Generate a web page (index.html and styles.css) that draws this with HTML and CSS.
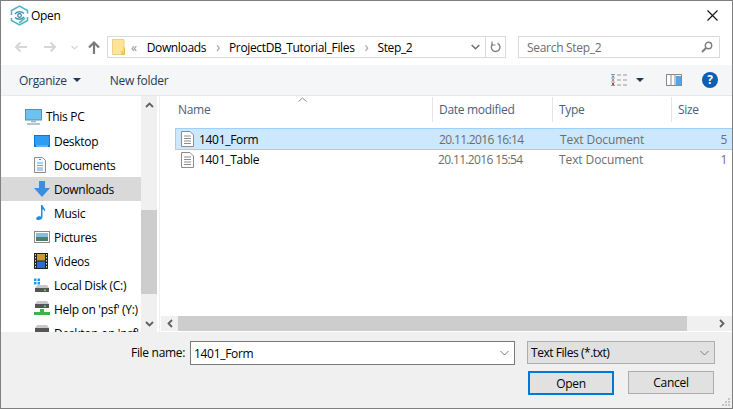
FILE: index.html
```html
<!DOCTYPE html>
<html lang="en">
<head>
<meta charset="utf-8">
<title>Open</title>
<link rel="stylesheet" href="styles.css">
</head>
<body>
<div class="window">
  <header class="titlebar">
    <svg class="app-icon" width="19" height="21" viewBox="0 0 19 21" fill="none">
      <path d="M1.500 10V5.500L9.500 1l8 4.500v3M17.500 12v3.500l-8 4.500-8-4.500V13" stroke="#52b0c4" stroke-width="1.500"/>
      <path d="M5 9c2-2.800 6.500-2.800 9-.5M14 12c-2 2.800-6.500 2.800-9 .5" stroke="#3f93b8" stroke-width="1.500"/>
      <circle cx="9.500" cy="10.500" r="1.800" stroke="#2b7fa8" stroke-width="1.200"/>
      <path d="M9 18l6-5" stroke="#58c4aa" stroke-width="1.800"/>
    </svg>
    <span class="title">Open</span>
    <svg class="close" width="11" height="11" viewBox="0 0 11 11"><path d="M.5.500l10 10M10.500.500l-10 10" stroke="#111" stroke-width="1.100"/></svg>
  </header>

  <nav class="navbar">
    <svg class="nav-arrow" width="13" height="12" viewBox="0 0 13 12"><path d="M13 6H2M6.500 1.500L2 6l4.500 4.500" fill="none" stroke="#d6d6d6" stroke-width="2"/></svg>
    <svg class="nav-arrow fwd" width="13" height="12" viewBox="0 0 13 12"><path d="M0 6h11M6.500 1.500L11 6l-4.500 4.500" fill="none" stroke="#d6d6d6" stroke-width="2"/></svg>
    <svg class="nav-drop" width="7" height="5" viewBox="0 0 7 5"><path d="M.5 1l3 3 3-3" fill="none" stroke="#d6d6d6" stroke-width="1.200"/></svg>
    <svg class="nav-up" width="12" height="13" viewBox="0 0 12 13"><path d="M6 13V2M1 6.500L6 1.500l5 5" fill="none" stroke="#7a7a7a" stroke-width="2.200"/></svg>
    <div class="address">
      <svg class="folder" width="13" height="16" viewBox="0 0 13 16"><path d="M.5.500h11.500v15H.5z" fill="#ffe396" stroke="#ead08a"/><path d="M12.500 8.500v7H10V12" fill="#f6d672" stroke="#e2bb55"/></svg>
      <span class="chev-double">«</span>
      <span class="crumb">Downloads</span>
      <span class="sep">›</span>
      <span class="crumb">ProjectDB_Tutorial_Files</span>
      <span class="sep">›</span>
      <span class="crumb">Step_2</span>
      <div class="address-end">
        <span class="addr-btn">
          <svg width="9" height="6" viewBox="0 0 9 6"><path d="M.7 1l3.800 3.800L8.300 1" fill="none" stroke="#6f6f6f" stroke-width="1.500"/></svg>
        </span>
        <span class="addr-btn refresh">
          <svg width="11" height="12" viewBox="0 0 11 12"><path d="M7.500 2.300A4.300 4.300 0 1 1 2.700 3" fill="none" stroke="#808080" stroke-width="1.400"/><path d="M2 .5v3.500h3.500" fill="none" stroke="#808080" stroke-width="1.200"/></svg>
        </span>
      </div>
    </div>
    <div class="search">
      <span>Search Step_2</span>
      <svg width="12" height="12" viewBox="0 0 12 12"><circle cx="7.500" cy="4.500" r="3.200" fill="none" stroke="#7d7d7d" stroke-width="1.400"/><path d="M5 7L1 11" stroke="#7d7d7d" stroke-width="2"/></svg>
    </div>
  </nav>

  <div class="toolbar">
    <span class="tool">Organize</span>
    <span class="caret"></span>
    <span class="tool newfolder">New folder</span>
    <div class="tool-right">
      <svg class="views" width="16" height="12" viewBox="0 0 16 12">
        <path d="M0 .500h4M0 4h4M0 8h4M0 11.500h4M6 1h4M6 6h4M6 11h4M12 1h4M12 6h4M12 11h4" stroke="#9a9a9a"/>
        <rect x="1" y="1.500" width="2" height="2" fill="#5aa0d8"/><rect x="1" y="5" width="2" height="2" fill="#9a9a9a"/><rect x="1" y="9" width="2" height="2" fill="#d04040"/>
      </svg>
      <span class="caret views-caret"></span>
      <svg class="pane" width="16" height="12" viewBox="0 0 16 12"><rect x=".5" y=".5" width="15" height="11" fill="#fff" stroke="#8a8a8a"/><rect x="10" y="2" width="5" height="9" fill="#4ea5e8"/><path d="M5 1v10M9 1v10" stroke="#8a8a8a"/></svg>
      <span class="help">?</span>
    </div>
  </div>

  <main class="content">
    <aside class="tree">
      <ul class="tree-list">
        <li class="tree-item root">
          <svg width="17" height="16" viewBox="0 0 17 16"><rect x=".5" y=".5" width="16" height="10.500" fill="#6ec2f0" stroke="#5a8fb0"/><path d="M6 12.500h5M2 15h13" stroke="#9cb2c2" stroke-width="1.600"/></svg>
          <span>This PC</span>
        </li>
        <li class="tree-item">
          <svg width="16" height="12" viewBox="0 0 16 12"><rect width="16" height="12" fill="#0d76d8"/><rect x="1" y="1" width="14" height="9" fill="#2e9cf2"/><path d="M2 11h12" stroke="#bfe0f8"/></svg>
          <span>Desktop</span>
        </li>
        <li class="tree-item">
          <svg width="12" height="16" viewBox="0 0 12 16"><path d="M.5.500h8l3 3v12H.5z" fill="#f8f8f8" stroke="#8c8c8c"/><path d="M3 6h6M3 8.500h6M3 11h6M3 13h6" stroke="#6aa6d6"/><path d="M5 2.500h2" stroke="#3c8ccc"/></svg>
          <span>Documents</span>
        </li>
        <li class="tree-item active">
          <svg width="16" height="16" viewBox="0 0 16 16"><path d="M5 0h6v7h5l-8 9-8-9h5z" fill="#3c8ee0"/></svg>
          <span>Downloads</span>
        </li>
        <li class="tree-item">
          <svg width="16" height="16" viewBox="0 0 16 16"><path d="M7 0h1.500c.5 3 3.500 3.500 2.500 7-.5-2-2-2.500-2.500-2.500V12c0 2-2.500 3.500-5 3-2-.5-1.500-3 .5-3.500 1-.3 2-.2 3 .2z" fill="#1c8cec"/></svg>
          <span>Music</span>
        </li>
        <li class="tree-item">
          <svg width="16" height="12" viewBox="0 0 16 12"><rect x=".5" y=".5" width="15" height="11" fill="#fff" stroke="#8a8a8a"/><rect x="2" y="2" width="12" height="4" fill="#86bfe0"/><rect x="2" y="6" width="12" height="4" fill="#4f7f68"/></svg>
          <span>Pictures</span>
        </li>
        <li class="tree-item">
          <svg width="14" height="16" viewBox="0 0 14 16"><rect width="14" height="16" fill="#222"/><rect x="3" y="1" width="8" height="6.500" fill="#c89a30"/><rect x="3" y="8.500" width="8" height="6.500" fill="#2c6cd0"/><path d="M1.500 1v14M12.500 1v14" stroke="#ddd" stroke-dasharray="1.500 1.500"/></svg>
          <span>Videos</span>
        </li>
        <li class="tree-item">
          <svg width="16" height="15" viewBox="0 0 16 15"><path d="M0 1h2.500v2.500H0zM3.500 1H6v2.500H3.500zM0 4.500h2.500V7H0zM3.500 4.500H6V7H3.500z" fill="#18a0e8"/><path d="M3 7.500h10l2 3H1z" fill="#c8c8c8"/><rect x="1" y="10.500" width="14" height="4" fill="#555"/><rect x="10" y="12" width="2" height="1.500" fill="#5fe060"/></svg>
          <span>Local Disk (C:)</span>
        </li>
        <li class="tree-item">
          <svg width="16" height="16" viewBox="0 0 16 16"><path d="M3 0h10l2 3H1z" fill="#c8c8c8"/><rect x="1" y="3" width="14" height="4" fill="#555"/><rect x="10" y="4.500" width="2" height="1.500" fill="#5fe060"/><path d="M6 8h4v3h6v3H0v-3h6z" fill="#3fb34a"/></svg>
          <span>Help on 'psf' (Y:)</span>
        </li>
        <li class="tree-item">
          <svg width="16" height="16" viewBox="0 0 16 16"><path d="M3 0h10l2 3H1z" fill="#c8c8c8"/><rect x="1" y="3" width="14" height="4" fill="#555"/></svg>
          <span>Desktop on 'psf'</span>
        </li>
      </ul>
    </aside>
    <div class="vscroll">
      <span class="sb-btn"><svg width="9" height="6" viewBox="0 0 9 6"><path d="M1 5l3.500-3.500L8 5" fill="none" stroke="#606060" stroke-width="1.800"/></svg></span>
      <span class="sb-gap"></span>
      <span class="sb-thumb"></span>
      <span class="sb-rest"></span>
      <span class="sb-btn"><svg width="9" height="6" viewBox="0 0 9 6"><path d="M1 1l3.500 3.500L8 1" fill="none" stroke="#606060" stroke-width="1.800"/></svg></span>
    </div>
    <section class="files">
      <div class="file-header">
        <svg class="sort" width="9" height="5" viewBox="0 0 9 5"><path d="M.5 4.500l4-3.500 4 3.500" fill="none" stroke="#8f8f8f"/></svg>
        <span class="col col-name">Name</span>
        <span class="col col-date">Date modified</span>
        <span class="col col-type">Type</span>
        <span class="col col-size">Size</span>
      </div>
      <div class="file-rows">
        <div class="file-row selected">
          <span class="cell cell-name">
            <svg width="13" height="16" viewBox="0 0 13 16"><path d="M.5.500h8.500l3.500 3.500v11.500H.5z" fill="#fff" stroke="#8c8c8c"/><path d="M3 5h7M3 7.500h7M3 10h7M3 12.500h7" stroke="#8c8c8c"/></svg>
            <span>1401_Form</span>
          </span>
          <span class="cell cell-date">20.11.2016 16:14</span>
          <span class="cell cell-type">Text Document</span>
          <span class="cell cell-size">5</span>
        </div>
        <div class="file-row">
          <span class="cell cell-name">
            <svg width="13" height="16" viewBox="0 0 13 16"><path d="M.5.500h8.500l3.500 3.500v11.500H.5z" fill="#fff" stroke="#8c8c8c"/><path d="M3 5h7M3 7.500h7M3 10h7M3 12.500h7" stroke="#8c8c8c"/></svg>
            <span>1401_Table</span>
          </span>
          <span class="cell cell-date">20.11.2016 15:54</span>
          <span class="cell cell-type">Text Document</span>
          <span class="cell cell-size">1</span>
        </div>
      </div>
      <div class="hscroll">
        <span class="hs-btn"><svg width="6" height="9" viewBox="0 0 6 9"><path d="M5 1L1.500 4.500 5 8" fill="none" stroke="#606060" stroke-width="1.800"/></svg></span>
        <span class="hs-thumb"></span>
        <span class="hs-btn end"><svg width="6" height="9" viewBox="0 0 6 9"><path d="M1 1l3.500 3.500L1 8" fill="none" stroke="#606060" stroke-width="1.800"/></svg></span>
      </div>
    </section>
  </main>

  <footer class="footer">
    <div class="footer-row">
      <label class="fname-label">File name:</label>
      <div class="fname-input">
        <span>1401_Form</span>
        <svg width="9" height="6" viewBox="0 0 9 6"><path d="M.5 1l4 4 4-4" fill="none" stroke="#7a7a7a"/></svg>
      </div>
      <div class="filter">
        <span>Text Files (*.txt)</span>
        <svg width="9" height="6" viewBox="0 0 9 6"><path d="M.5 1l4 4 4-4" fill="none" stroke="#7a7a7a"/></svg>
      </div>
    </div>
    <div class="footer-buttons">
      <button class="btn primary">Open</button>
      <button class="btn">Cancel</button>
    </div>
    <svg class="grip" width="10" height="10" viewBox="0 0 10 10"><path d="M7 1h2v2H7zM4 4h2v2H4zM7 4h2v2H7zM1 7h2v2H1zM4 7h2v2H4zM7 7h2v2H7z" fill="#c4c4c4"/></svg>
  </footer>
</div>
</body>
</html>
```
FILE: styles.css
```css
* { box-sizing: border-box; }
html, body { margin: 0; padding: 0; }
body {
  width: 733px;
  height: 409px;
  overflow: hidden;
  background: #fff;
  font-family: "Open Sans", "Noto Sans", sans-serif;
  font-size: 12px;
  letter-spacing: -0.3px;
  color: #000;
}
.window {
  width: 733px;
  height: 409px;
  border: 1px solid #7f7f7f;
  display: flex;
  flex-direction: column;
  position: relative;
}
.titlebar {
  height: 29px;
  display: flex;
  align-items: center;
  padding: 0 14px 0 9px;
  flex: none;
}
.title { margin-left: 2px; font-size: 12px; }
.close { margin-left: auto; }

.navbar {
  height: 35px;
  flex: none;
  display: flex;
  align-items: center;
  padding: 0 12px 1px 13px;
}
.nav-arrow { margin-right: 17px; }
.nav-arrow.fwd { margin-right: 14px; }
.nav-drop { margin-right: 10px; }
.nav-up { margin-right: 7px; }
.address {
  width: 399px;
  height: 22px;
  border: 1px solid #d9d9d9;
  display: flex;
  align-items: center;
  padding-left: 4px;
  font-size: 12px;
}
.crumb { letter-spacing: -0.35px; }
.folder { margin-right: 6px; }
.chev-double { color: #8a8a8a; margin-right: 10px; font-size: 12px; }
.sep { color: #9a9a9a; margin: 0 9px 0 10px; font-size: 14px; line-height: 14px; }
.address-end { margin-left: auto; display: flex; height: 100%; }
.addr-btn {
  width: 20px;
  display: flex;
  align-items: center;
  justify-content: center;
}
.addr-btn.refresh { border-left: 1px solid #d9d9d9; }
.search {
  width: 202px;
  height: 22px;
  margin-left: 12px;
  border: 1px solid #d9d9d9;
  display: flex;
  align-items: center;
  justify-content: space-between;
  padding: 0 6px 0 8px;
  color: #6d6d6d;
}

.toolbar {
  height: 31px;
  flex: none;
  background: #f5f6f7;
  border-bottom: 1px solid #e9e9e9;
  display: flex;
  align-items: center;
  padding-left: 18px;
  color: #1e395b;
}
.caret {
  width: 0;
  height: 0;
  border-left: 4px solid transparent;
  border-right: 4px solid transparent;
  border-top: 4px solid #1e395b;
  margin-left: 6px;
}
.newfolder { margin-left: 29px; }
.tool-right {
  margin-left: auto;
  display: flex;
  align-items: center;
  padding-right: 14px;
}
.views-caret { margin-left: 9px; margin-right: 0; }
.pane { margin-left: 22px; }
.help {
  width: 16px;
  height: 16px;
  margin-left: 20px;
  border-radius: 50%;
  background: #0a5eb4;
  color: #fff;
  font-weight: 700;
  font-size: 12px;
  line-height: 16px;
  text-align: center;
}

.content {
  flex: none;
  height: 236px;
  display: flex;
  overflow: hidden;
}
.tree {
  width: 140px;
  flex: none;
  overflow: hidden;
  padding-top: 8px;
}
.tree-list { list-style: none; margin: 0; padding: 0; }
.tree-item {
  height: 24px;
  display: flex;
  align-items: center;
  padding-left: 32px;
  position: relative;
  white-space: nowrap;
  color: #000;
}
.tree-item > svg {
  position: absolute;
  left: 33px;
  top: 50%;
  transform: translate(0, -50%);
}
.tree-item > span { margin-left: 21px; }
.tree-item.root { padding-left: 24px; height: 25px; }
.tree-item.root > svg { left: 24px; }
.tree-item.root > span { margin-left: 21px; }
.tree-item.active { background: #d9d9d9; }

.vscroll {
  width: 16px;
  flex: none;
  display: flex;
  flex-direction: column;
  background: #f0f0f0;
}
.sb-btn {
  height: 17px;
  flex: none;
  display: flex;
  align-items: center;
  justify-content: center;
}
.sb-gap { height: 97px; flex: none; }
.sb-thumb { height: 84px; background: #cdcdcd; flex: none; }
.sb-rest { flex: 1; }

.files {
  flex: 1;
  min-width: 0;
  margin-left: 2px;
  border-left: 1px solid #f0f0f0;
  display: flex;
  flex-direction: column;
  position: relative;
}
.file-header {
  height: 26px;
  flex: none;
  display: flex;
  align-items: stretch;
  color: #4c607a;
}
.sort { position: absolute; left: 138px; top: 1px; }
.col {
  display: flex;
  align-items: center;
  padding-left: 6px;
  border-right: 1px solid #e5e5e5;
  height: 25px;
  margin-top: 1px;
}
.col-name { width: 273px; padding-left: 18px; }
.col-date { width: 120px; }
.col-type { width: 119px; }
.col-size { flex: 1; border-right: 0; }
.file-rows { flex: 1; padding-top: 6px; padding-left: 15px; }
.file-row {
  height: 19px;
  display: flex;
  align-items: center;
  color: #6d6d6d;
  white-space: nowrap;
}
.file-row.selected {
  height: 22px;
  background: #cce8ff;
  border: 1px solid #99d1ff;
  border-right: 0;
  margin-left: 0;
}
.cell { display: flex; align-items: center; }
.cell-name { width: 258px; padding-left: 5px; color: #000; gap: 5px; }
.file-row:not(.selected) .cell-name { padding-left: 6px; }
.cell-date { width: 120px; padding-left: 5px; letter-spacing: -0.65px; }
.cell-type { width: 120px; padding-left: 6px; letter-spacing: -0.1px; }
.cell-size { flex: 1; justify-content: flex-end; padding-right: 5px; }
.hscroll {
  height: 15px;
  margin-bottom: 1px;
  margin-left: 1px;
  flex: none;
  display: flex;
  background: #f0f0f0;
}
.hs-btn {
  width: 17px;
  flex: none;
  display: flex;
  align-items: center;
  justify-content: center;
}
.hs-btn.end { width: 44px; justify-content: flex-end; padding-right: 6px; background: #f0f0f0; }
.hs-thumb { width: 509px; background: #cdcdcd; flex: none; }

.footer {
  flex: 1;
  background: #f0f0f0;
  position: relative;
  padding-top: 9px;
}
.footer-row { display: flex; align-items: flex-start; padding-left: 130px; }
.fname-label { width: 59px; line-height: 24px; color: #000; }
.fname-input {
  width: 325px;
  height: 24px;
  background: #fff;
  border: 1px solid #7a7a7a;
  display: flex;
  align-items: center;
  justify-content: space-between;
  padding: 0 5px 0 3px;
}
.filter {
  width: 188px;
  height: 23px;
  margin-left: 12px;
  background: #e1e1e1;
  border: 1px solid #adadad;
  display: flex;
  align-items: center;
  justify-content: space-between;
  padding: 0 5px 0 3px;
  letter-spacing: -0.45px;
}
.footer-buttons {
  display: flex;
  gap: 14px;
  padding-left: 527px;
  margin-top: 6px;
  align-items: flex-start;
}
.btn {
  width: 86px;
  height: 23px;
  background: #e1e1e1;
  border: 1px solid #adadad;
  font: inherit;
  letter-spacing: inherit;
  color: #000;
  padding: 0;
}
.btn.primary {
  border: 2px solid #0078d7;
  height: 24px;
}
.grip { position: absolute; right: 1px; bottom: 1px; }
```
